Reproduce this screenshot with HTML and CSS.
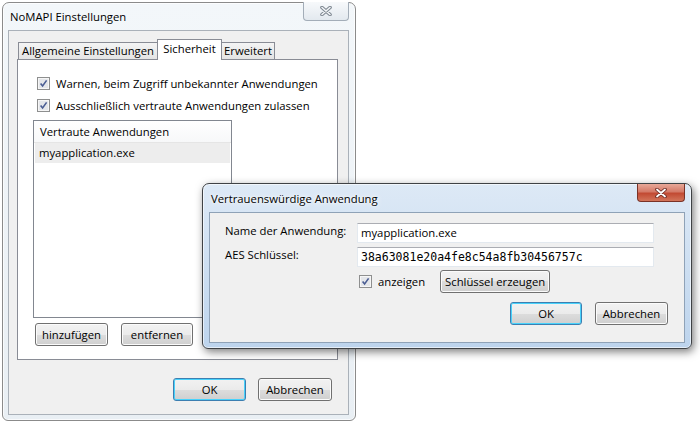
FILE: index.html
```html
<!DOCTYPE html>
<html lang="de">
<head>
    <meta charset="UTF-8">
    <title>NoMAPI Einstellungen</title>
    <link rel="stylesheet" href="styles.css">
</head>
<body>
    <div class="desktop">
        <!-- Hauptfenster (inaktiv) -->
        <div class="window settings">
            <div class="titlebar">
                <span class="title">NoMAPI Einstellungen</span>
                <span class="close-btn">
                    <svg width="12" height="10" viewBox="0 0 12 10"><path d="M2 1.5 L10 8.5 M10 1.5 L2 8.5" stroke="#7d8690" stroke-width="3.6" stroke-linecap="round"/><path d="M2 1.5 L10 8.5 M10 1.5 L2 8.5" stroke="#f4f6f8" stroke-width="1.6" stroke-linecap="round"/></svg>
                </span>
            </div>
            <div class="client">
                <div class="tabs">
                    <div class="tab tab-general">Allgemeine Einstellungen</div>
                    <div class="tab tab-security active">Sicherheit</div>
                    <div class="tab tab-advanced">Erweitert</div>
                </div>
                <div class="tab-panel">
                    <label class="check">
                        <svg class="box" width="13" height="13" viewBox="0 0 13 13"><rect x="0.5" y="0.5" width="12" height="12" fill="#f6f6f6" stroke="#8e8f8f"/><rect x="2" y="2" width="9" height="9" fill="#e4e6ea"/><path d="M3.6 6.4 L5.6 9 L9.6 3.4" fill="none" stroke="#4a5d93" stroke-width="1.6"/></svg>
                        Warnen, beim Zugriff unbekannter Anwendungen
                    </label>
                    <label class="check">
                        <svg class="box" width="13" height="13" viewBox="0 0 13 13"><rect x="0.5" y="0.5" width="12" height="12" fill="#f6f6f6" stroke="#8e8f8f"/><rect x="2" y="2" width="9" height="9" fill="#e4e6ea"/><path d="M3.6 6.4 L5.6 9 L9.6 3.4" fill="none" stroke="#4a5d93" stroke-width="1.6"/></svg>
                        Ausschließlich vertraute Anwendungen zulassen
                    </label>
                    <div class="listview">
                        <div class="lv-header">Vertraute Anwendungen</div>
                        <div class="lv-row selected">myapplication.exe</div>
                    </div>
                    <div class="list-buttons">
                        <button class="btn btn-add">hinzufügen</button>
                        <button class="btn btn-remove">entfernen</button>
                    </div>
                </div>
                <div class="dialog-buttons">
                    <button class="btn btn-ok default">OK</button>
                    <button class="btn btn-cancel">Abbrechen</button>
                </div>
            </div>
        </div>

        <!-- Dialog (aktiv) -->
        <div class="window trust">
            <div class="titlebar">
                <span class="title">Vertrauenswürdige Anwendung</span>
                <span class="close-btn">
                    <svg width="12" height="10" viewBox="0 0 12 10"><path d="M2 1.5 L10 8.5 M10 1.5 L2 8.5" stroke="#6b2a22" stroke-width="3.6" stroke-linecap="round"/><path d="M2 1.5 L10 8.5 M10 1.5 L2 8.5" stroke="#ffffff" stroke-width="1.8" stroke-linecap="round"/></svg>
                </span>
            </div>
            <div class="client">
                <div class="form">
                    <span class="label">Name der Anwendung:</span>
                    <div class="textbox">myapplication.exe</div>
                    <span class="label">AES Schlüssel:</span>
                    <div class="textbox mono">38a63081e20a4fe8c54a8fb30456757c</div>
                    <div class="key-row">
                        <label class="check">
                            <svg class="box" width="13" height="13" viewBox="0 0 13 13"><rect x="0.5" y="0.5" width="12" height="12" fill="#f6f6f6" stroke="#8e8f8f"/><rect x="2" y="2" width="9" height="9" fill="#e4e6ea"/><path d="M3.6 6.4 L5.6 9 L9.6 3.4" fill="none" stroke="#4a5d93" stroke-width="1.6"/></svg>
                            anzeigen
                        </label>
                        <button class="btn btn-generate">Schlüssel erzeugen</button>
                    </div>
                </div>
                <div class="dialog-buttons">
                    <button class="btn btn-ok default">OK</button>
                    <button class="btn btn-cancel">Abbrechen</button>
                </div>
            </div>
        </div>
    </div>
</body>
</html>
```

FILE: styles.css
```css
* {
    box-sizing: border-box;
}
body {
    margin: 0;
    background-color: #fff;
    font-family: "Open Sans", "Noto Sans", sans-serif;
    font-size: 11.3px;
    color: #000;
}
.desktop {
    position: relative;
    width: 700px;
    height: 424px;
    overflow: hidden;
}

/* Fensterrahmen */
.window {
    position: absolute;
    display: flex;
    flex-direction: column;
    border: 1px solid #8b8b8b;
    border-radius: 7px 7px 6px 6px;
    box-shadow: inset 0 0 0 1px rgba(255, 255, 255, 0.7);
}
.settings {
    left: 2px;
    top: 2px;
    width: 354px;
    height: 419px;
    padding: 0 6px 5px 5px;
    background: linear-gradient(#f3f7fa, #e9eff4);
}
.trust {
    left: 202px;
    top: 183px;
    width: 490px;
    height: 166px;
    padding: 0 6px 5px 6px;
    border-color: #3f4245;
    background: linear-gradient(#dde9f6 0%, #cfe0f2 45%, #bdd4ed 100%);
    box-shadow: inset 0 0 0 1px rgba(255, 255, 255, 0.6), 2px 3px 9px rgba(0, 0, 0, 0.5);
}
.titlebar {
    display: flex;
    justify-content: space-between;
    align-items: flex-start;
    height: 27px;
}
.trust .titlebar {
    height: 28px;
}
.title {
    padding: 6px 0 0 2px;
    line-height: 15px;
}
.trust .title {
    padding-top: 7px;
    text-shadow: 0 0 7px #fff, 0 0 3px #fff;
}
.close-btn {
    display: flex;
    align-items: center;
    justify-content: center;
    width: 46px;
    height: 19px;
    margin-top: -1px;
    border: 1px solid #a3adb8;
    border-top: none;
    border-radius: 0 0 4px 4px;
    background: linear-gradient(#f7f9fb, #e3e9ef);
}
.trust .close-btn {
    width: 48px;
    height: 18px;
    margin-top: 0;
    border-color: #7a3226;
    background: linear-gradient(#e8a898 0%, #d47a68 45%, #c24a33 55%, #d2745a 100%);
}

/* Client-Bereich */
.client {
    flex: 1;
    display: flex;
    flex-direction: column;
    background-color: #f0f0f0;
    border: 1px solid #aab1b9;
}
.trust .client {
    border-color: #8fa2b7;
}

/* Registerkarten */
.tabs {
    display: flex;
    align-items: flex-end;
    height: 20px;
    margin: 8px 0 0 9px;
}
.tab {
    height: 17px;
    line-height: 15px;
    text-align: center;
    border: 1px solid #898c95;
    border-bottom: none;
    background: linear-gradient(#f4f4f4, #e4e4e4);
}
.tab-general {
    width: 140px;
}
.tab-security {
    width: 65px;
}
.tab-advanced {
    width: 54px;
    margin-left: -1px;
}
.tab.active {
    position: relative;
    z-index: 1;
    height: 21px;
    line-height: 17px;
    margin-bottom: -1px;
    margin-left: -1px;
    background: #fff;
}
.tab-panel {
    width: 321px;
    height: 301px;
    margin-left: 8px;
    padding: 12px 0 0 0;
    background-color: #fff;
    border: 1px solid #898c95;
}

/* Kontrollkästchen */
.check {
    display: flex;
    align-items: center;
    height: 22px;
    padding-left: 19px;
}
.check .box {
    flex: none;
    margin-right: 6px;
}

/* Liste */
.listview {
    width: 199px;
    height: 198px;
    margin: 4px 0 0 15px;
    border: 1px solid #828790;
    background-color: #fff;
}
.lv-header {
    height: 22px;
    line-height: 21px;
    padding-left: 6px;
    border-bottom: 1px solid #e5e5e5;
    background: linear-gradient(#fff, #f7f8f9);
}
.lv-row {
    height: 20px;
    line-height: 19px;
    margin: 0 1px;
    padding-left: 4px;
}
.lv-row.selected {
    background-color: #ededed;
}

/* Schaltflächen */
.btn {
    height: 23px;
    padding: 0;
    font-family: inherit;
    font-size: inherit;
    color: #000;
    border: 1px solid #707070;
    border-radius: 3px;
    background: linear-gradient(#f2f2f2 0%, #ebebeb 50%, #dddddd 50%, #cfcfcf 100%);
    box-shadow: inset 0 0 0 1px #fbfbfb;
}
.btn.default {
    border-color: #3c7fb1;
    box-shadow: inset 0 0 0 1px #48d2fb;
    background: linear-gradient(#eaf6fd 0%, #d9f0fc 50%, #bee6fd 50%, #a7d9f5 100%);
    background: linear-gradient(#f2f2f2 0%, #ebebeb 50%, #dddddd 50%, #cfcfcf 100%);
}
.list-buttons {
    display: flex;
    gap: 13px;
    margin: 5px 0 0 17px;
}
.btn-add {
    width: 73px;
}
.btn-remove {
    width: 72px;
}
.dialog-buttons {
    display: flex;
    justify-content: flex-end;
    gap: 12px;
    margin-top: 18px;
    padding-right: 16px;
}
.btn-ok {
    width: 73px;
}
.btn-cancel {
    width: 74px;
}

/* Eingabeformular */
.form {
    display: grid;
    grid-template-columns: 132px 297px;
    grid-auto-rows: 20px;
    row-gap: 4px;
    align-items: start;
    padding: 10px 0 0 15px;
}
.label {
    line-height: 15px;
}
.textbox {
    height: 20px;
    line-height: 18px;
    padding-left: 3px;
    background-color: #fff;
    border: 1px solid #e3e9ef;
    border-top-color: #abadb3;
}
.mono {
    font-family: "DejaVu Sans Mono", monospace;
    font-size: 11.5px;
}
.key-row {
    grid-column: 2;
    display: flex;
    align-items: center;
    height: 23px;
    margin-top: -1px;
    padding-left: 2px;
}
.key-row .check {
    padding-left: 0;
}
.btn-generate {
    width: 110px;
    margin-left: 15px;
}
.trust .dialog-buttons {
    gap: 13px;
    margin-top: 11px;
}
.trust .btn-ok {
    width: 72px;
}
.trust .btn-cancel {
    width: 73px;
}
```
